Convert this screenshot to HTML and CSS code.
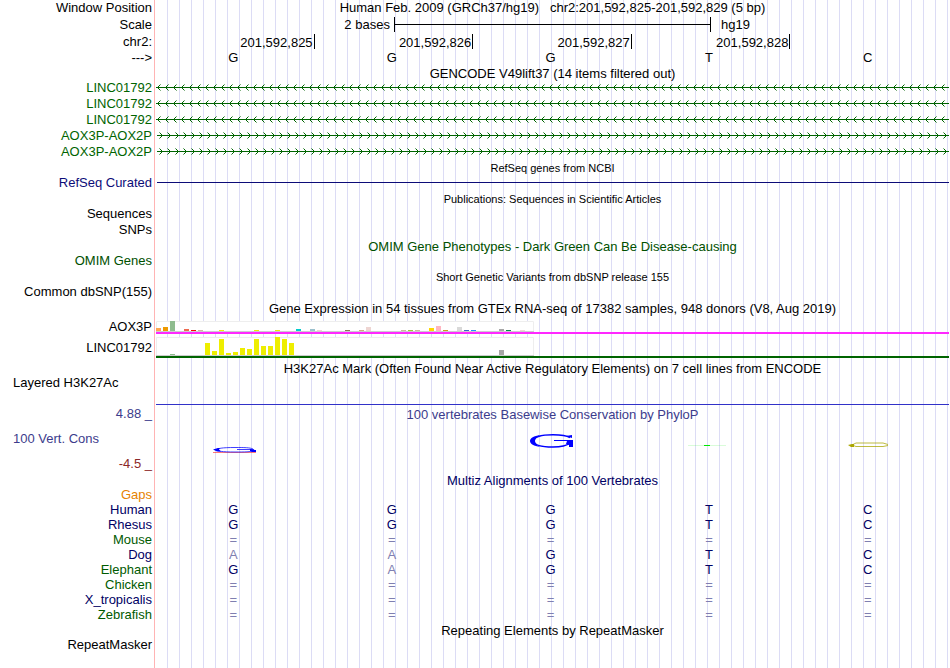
FILE: index.html
```html
<!DOCTYPE html>
<html lang="en">
<head>
<meta charset="utf-8">
<title>Human Feb. 2009 (GRCh37/hg19) chr2:201,592,825-201,592,829</title>
<link rel="stylesheet" href="styles.css">
</head>
<body>
<svg class="defs" width="0" height="0" aria-hidden="true">
<defs>
<pattern id="left" x="1" width="8" height="16" patternUnits="userSpaceOnUse"><path fill="#006400" d="M0 7h8v1H0zM1 6h1v3H1zM2 5h1v1H2zM2 9h1v1H2z"/><path fill="#006400" opacity=".5" d="M3 4h1v1H3zM3 10h1v1H3z"/></pattern>
<pattern id="right" x="1" width="8" height="16" patternUnits="userSpaceOnUse"><path fill="#006400" d="M0 7h8v1H0zM4 6h1v3H4zM3 5h1v1H3zM3 9h1v1H3z"/><path fill="#006400" opacity=".5" d="M2 4h1v1H2zM2 10h1v1H2z"/></pattern>
</defs>
</svg>
<main class="browser">
<div class="row tall"><span class="label">Window Position</span><h1 class="title">Human Feb. 2009 (GRCh37/hg19) &nbsp; chr2:201,592,825-201,592,829 (5 bp)</h1></div>
<div class="row tall"><span class="label">Scale</span><div class="scale"><span>2 bases</span><i class="bar"></i><span>hg19</span></div></div>
<div class="row"><span class="label">chr2:</span><div class="ticks"><span>201,592,825</span><span>201,592,826</span><span>201,592,827</span><span>201,592,828</span></div></div>
<div class="row short"><span class="label">---&gt;</span><div class="bases"><span>G</span><span>G</span><span>G</span><span>T</span><span>C</span></div></div>

<h2 class="title short">GENCODE V49lift37 (14 items filtered out)</h2>
<div class="row green"><span class="label">LINC01792</span><svg class="gene"><rect width="100%" height="16" fill="url(#left)"/></svg></div>
<div class="row green"><span class="label">LINC01792</span><svg class="gene"><rect width="100%" height="16" fill="url(#left)"/></svg></div>
<div class="row green"><span class="label">LINC01792</span><svg class="gene"><rect width="100%" height="16" fill="url(#left)"/></svg></div>
<div class="row green"><span class="label">AOX3P-AOX2P</span><svg class="gene"><rect x="1" width="100%" height="16" fill="url(#right)"/></svg></div>
<div class="row green"><span class="label">AOX3P-AOX2P</span><svg class="gene"><rect x="1" width="100%" height="16" fill="url(#right)"/></svg></div>

<h2 class="title short small">RefSeq genes from NCBI</h2>
<div class="row refseq"><span class="label">RefSeq Curated</span><svg class="gene"><rect x="1" y="7" width="100%" height="1" fill="#0c0c78"/></svg></div>

<h2 class="title short small">Publications: Sequences in Scientific Articles</h2>
<div class="row"><span class="label">Sequences</span></div>
<div class="row"><span class="label">SNPs</span></div>

<h2 class="title short omim">OMIM Gene Phenotypes - Dark Green Can Be Disease-causing</h2>
<div class="row omim"><span class="label">OMIM Genes</span></div>

<h2 class="title short small">Short Genetic Variants from dbSNP release 155</h2>
<div class="row"><span class="label">Common dbSNP(155)</span></div>

<h2 class="title">Gene Expression in 54 tissues from GTEx RNA-seq of 17382 samples, 948 donors (V8, Aug 2019)</h2>
<div class="row gtex low"><span class="label">AOX3P</span><div class="expression magenta">
<svg width="378" height="11"><path fill="#fff" stroke="#eee" d="M.5.5h377v12H.5z"/><path fill="#ccc" d="M0 10h378v1H0z"/>
<path fill="#ffa54f" d="M0 7h5v3H0z"/><path fill="#ee9a00" d="M7 6h5v4H7z"/><path fill="#8fbc8f" d="M14 0h5v10h-5z"/><path fill="#ee6a50" d="M28 8h5v2h-5z"/><path fill="#f00" d="M35 9h5v1h-5z"/><path fill="#cdb79e" d="M42 9h5v1h-5zM245 9h5v1h-5zM259 9h5v1h-5z"/><path fill="#eeee00" d="M63 9h5v1h-5zM98 9h5v1h-5zM119 9h5v1h-5z"/><path fill="#00cdcd" d="M140 8h5v2h-5z"/><path fill="#9ac0cd" d="M154 8h5v2h-5z"/><path fill="#eed5d2" d="M161 9h5v1h-5zM210 6h5v4h-5zM364 9h5v1h-5z"/><path fill="#8b7355" d="M189 9h5v1h-5z"/><path fill="#cdaa7d" d="M203 9h5v1h-5z"/><path fill="#9acd32" d="M252 9h5v1h-5z"/><path fill="#ffd700" d="M273 7h5v3h-5z"/><path fill="#ffb6c1" d="M280 5h5v5h-5z"/><path fill="#cd9b1d" d="M287 9h5v1h-5z"/><path fill="#d9d9d9" d="M301 6h5v4h-5z"/><path fill="#3a5fcd" d="M308 9h5v1h-5z"/><path fill="#1e90ff" d="M315 9h5v1h-5z"/><path fill="#a6a6a6" d="M343 8h5v2h-5z"/><path fill="#008b45" d="M350 9h5v1h-5z"/></svg></div></div>
<div class="row gtex high"><span class="label">LINC01792</span><div class="expression darkgreen">
<svg width="378" height="19"><path fill="#fff" stroke="#eee" d="M.5.5h377v19H.5z"/><path fill="#ccc" d="M0 18h378v1H0z"/>
<path fill="#8fbc8f" d="M14 17h5v1h-5z"/><path fill="#eeee00" d="M49 6h5v12h-5zM56 14h5v4h-5zM63 2h5v16h-5zM70 16h5v2h-5zM77 15h5v3h-5zM84 11h5v7h-5zM91 12h5v6h-5zM98 2h5v16h-5zM105 9h5v9h-5zM112 9h5v9h-5zM119 0h5v18h-5zM126 2h5v16h-5zM133 6h5v12h-5z"/><path fill="#a6a6a6" d="M343 13h5v5h-5z"/></svg></div></div>

<h2 class="title encode">H3K27Ac Mark (Often Found Near Active Regulatory Elements) on 7 cell lines from ENCODE</h2>
<div class="row layered"><span class="label side">Layered H3K27Ac</span></div>

<section class="conservation">
<div class="axis"><span>4.88 _</span><span class="side">100 Vert. Cons</span><span class="min">-4.5 _</span></div>
<div class="phylop"><h2 class="title short">100 vertebrates Basewise Conservation by PhyloP</h2>
<div class="logos">
<svg viewBox="0 0 46 50"><path fill="#f22" opacity=".6" d="M1 31h43v1H1z"/><path fill="none" stroke="#00f" opacity=".75" d="M41 28c-3-1.500-9-1.500-18-1.500-13 0-18 1-18 2.300s5 2.200 18 2.200c10 0 16 0 18-1.500M25 28.500h17"/><path fill="#00f" d="M1 28.500l5-1.500 2 0-1 1.500 2 2H5zM38 28l5 1h1v2h-4l-2-1z"/></svg>
<span></span>
<svg viewBox="0 0 46 50"><path fill="none" stroke="#00f" stroke-width="1.500" d="M41 16.500C37 14 31 13.700 24 13.700c-12 0-19 2.300-19 6.300s7 6 19 6c8 0 14-1.500 17-4"/><path fill="#00f" d="M1 20c0-3 4-5 10-6-3 2-5 3.500-5 6s2 4.500 5 6c-6-1-10-3-10-6zM25 19h19v7h-4v-2l-3-1 1-3H25zM37 15l6-1v3z"/></svg>
<svg viewBox="0 0 46 50"><path fill="#00e800" opacity=".15" d="M0 24h38v1H0z"/><path fill="#00e800" d="M16 24h6v1h-6z"/></svg>
<svg viewBox="0 0 46 50"><path fill="none" stroke="#aaa600" opacity=".75" d="M41 23.500l-5-1.500H9l-4 2 4 1.500h27l5-1"/><path fill="#aaa600" d="M1 24l4-1h2v3H4z"/></svg>
</div></div>
</section>

<h2 class="title short navy">Multiz Alignments of 100 Vertebrates</h2>
<div class="row short gaps"><span class="label">Gaps</span></div>
<div class="row short navy"><span class="label">Human</span><div class="bases"><span>G</span><span>G</span><span>G</span><span>T</span><span>C</span></div></div>
<div class="row short navy"><span class="label">Rhesus</span><div class="bases"><span>G</span><span>G</span><span>G</span><span>T</span><span>C</span></div></div>
<div class="row short forest"><span class="label">Mouse</span><div class="bases"><i>=</i><i>=</i><i>=</i><i>=</i><i>=</i></div></div>
<div class="row short navy"><span class="label">Dog</span><div class="bases"><i>A</i><i>A</i><span>G</span><span>T</span><span>C</span></div></div>
<div class="row short forest"><span class="label">Elephant</span><div class="bases"><span>G</span><i>A</i><span>G</span><span>T</span><span>C</span></div></div>
<div class="row short forest"><span class="label">Chicken</span><div class="bases"><i>=</i><i>=</i><i>=</i><i>=</i><i>=</i></div></div>
<div class="row short navy"><span class="label">X_tropicalis</span><div class="bases"><i>=</i><i>=</i><i>=</i><i>=</i><i>=</i></div></div>
<div class="row short forest"><span class="label">Zebrafish</span><div class="bases"><i>=</i><i>=</i><i>=</i><i>=</i><i>=</i></div></div>

<h2 class="title short">Repeating Elements by RepeatMasker</h2>
<div class="row short"><span class="label">RepeatMasker</span></div>
</main>
</body>
</html>
```
FILE: styles.css
```css
* { box-sizing: border-box; }
body { margin: 0; background: #fff; }
.defs { display: block; }

.browser {
  min-height: 100vh;
  padding-right: 1px;
  color: #000;
  font: 13px/16px "Liberation Sans", Arial, sans-serif;
  background:
    linear-gradient(#ffb4b4, #ffb4b4) 154px 0 / 1px 100% no-repeat,
    repeating-linear-gradient(to right, transparent 0 11px, #dcdcf5 11px 12px) 156px 0 no-repeat;
}

.row { display: grid; grid-template-columns: 152px 1fr; column-gap: 4px; height: 16px; }
.label { text-align: right; white-space: nowrap; }
.title { height: 16px; margin: 0 0 0 156px; font-size: 13px; font-weight: normal; line-height: 17px; text-align: center; white-space: nowrap; }
.row .title { margin: 0; line-height: 16px; }
.tall { height: 17px; line-height: 16px; }
.short { height: 15px; line-height: 15px; }
.title.short { line-height: 17px; }
.title.small { font-size: 11px; }
.side { padding-left: 13px; text-align: left; }

.scale { display: grid; grid-template-columns: 3fr 4fr 3fr; line-height: 16px; }
.scale span:first-child { padding-right: 4px; text-align: right; }
.scale span:last-child { padding-left: 10px; }
.bar { height: 15px; border: solid #000; border-width: 0 1px; background: linear-gradient(#000, #000) 0 7px / 100% 1px no-repeat; }
.ticks { display: grid; grid-template-columns: repeat(5, 1fr); }
.ticks span { height: 15px; padding-right: 1px; border-right: 1px solid #000; line-height: 17px; text-align: right; }
.bases { display: grid; grid-template-columns: repeat(5, 1fr); margin: 0 2px 0 -2px; text-align: center; }
.bases span { color: #000064; }
.bases i { color: #7f7fb1; font-style: normal; }
.row:not(.navy):not(.forest) > .bases span { color: #000; }

.gene { display: block; width: 100%; height: 16px; }
.green { color: #006400; }
.refseq { color: #0c0c78; }
.omim { color: #005000; }
.navy { color: #000064; }
.forest { color: #005a00; }
.gaps { color: #e68200; }

.gtex { height: auto; }
.expression svg { display: block; }
.expression { border-bottom: 2px solid; }
.low { padding-top: 5px; }
.low .label { line-height: 12px; }
.high { padding-top: 3px; }
.high .label { line-height: 21px; }
.magenta { border-color: #ff28ff; }
.darkgreen { border-color: #006400; }
.encode { margin-top: 3px; height: 14px; line-height: 16px; }
.layered { height: 29px; }

.conservation { display: grid; grid-template-columns: 152px 1fr; column-gap: 4px; color: #3c3c8c; }
.axis { display: flex; flex-direction: column; justify-content: space-between; height: 68px; padding-top: 2px; text-align: right; }
.min { color: #8c2828; }
.phylop { border-top: 1px solid #3232c8; }
.phylop .title { margin: 1px 0 0; }
.logos { display: grid; grid-template-columns: repeat(5, 1fr); justify-items: center; }
.logos svg { display: block; width: 46px; height: 50px; }
```
